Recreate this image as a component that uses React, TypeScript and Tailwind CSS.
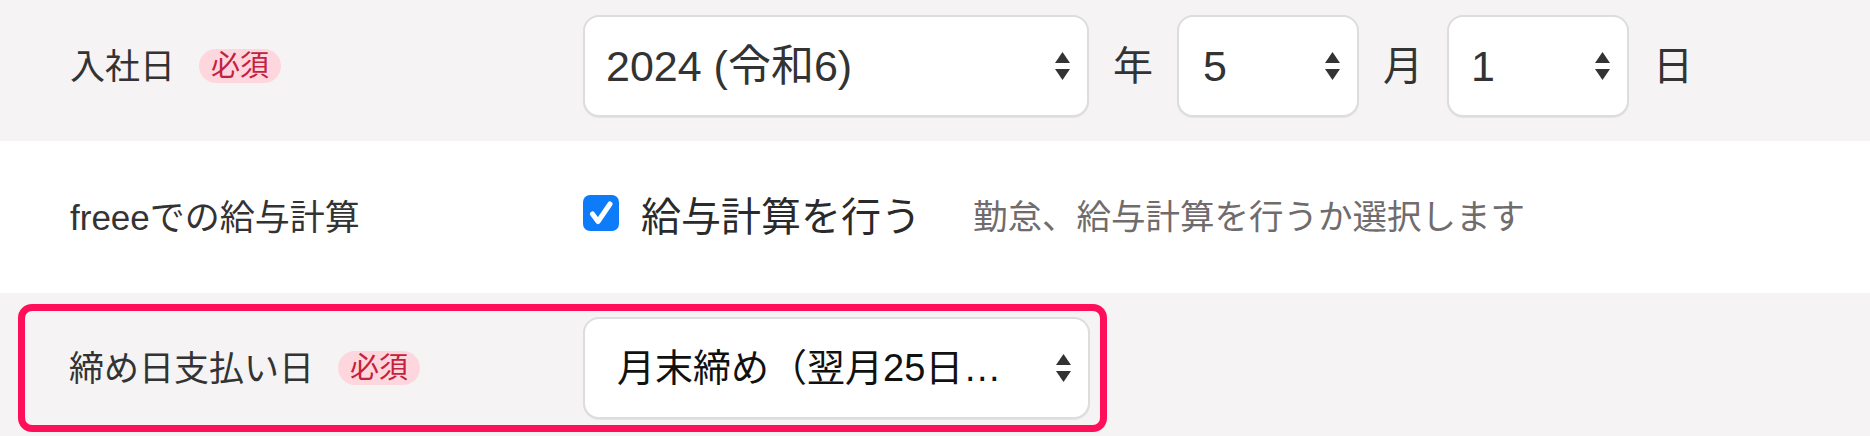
import React from "react";

function SelectArrows() {
  return (
    <svg width="15" height="28" viewBox="0 0 15 28" className="shrink-0">
      <path d="M7.5 0 L15 11 L0 11 Z" fill="#333333" />
      <path d="M0 17 L15 17 L7.5 28 Z" fill="#333333" />
    </svg>
  );
}

function FakeSelect({
  value,
  className,
  textClass,
}: {
  value: string;
  className: string;
  textClass: string;
}) {
  return (
    <div
      className={`flex h-[102px] items-center justify-between rounded-[16px] border-2 border-[#dddddd] bg-white pr-[17px] shadow-[0_1px_0_#e4e4e4] ${className}`}
    >
      <span className={`whitespace-nowrap leading-none ${textClass}`}>{value}</span>
      <SelectArrows />
    </div>
  );
}

function RequiredBadge() {
  return (
    <span className="flex h-[34px] items-center rounded-full bg-[#fdd7dd] px-[12px] text-[29px] leading-none text-[#c4213f]">
      必須
    </span>
  );
}

export default function App() {
  return (
    <div className="w-[1870px] font-['Liberation_Sans','Noto_Sans_CJK_JP',sans-serif] text-[#333333]">
      {/* 入社日 */}
      <div className="h-[141px] bg-[#f5f3f4] pl-[70px] pt-[15px]">
        <div className="flex h-[102px] items-center">
          <div className="flex w-[513px] items-center gap-[24px]">
            <span className="text-[35px] leading-none">入社日</span>
            <RequiredBadge />
          </div>
          <div className="flex items-center gap-[24px]">
            <FakeSelect value="2024 (令和6)" className="w-[506px] pl-[21px]" textClass="text-[43px] text-[#333333]" />
            <span className="text-[40px] leading-none">年</span>
            <FakeSelect value="5" className="w-[182px] pl-[24px]" textClass="text-[43px] text-[#333333]" />
            <span className="text-[40px] leading-none">月</span>
            <FakeSelect value="1" className="w-[182px] pl-[22px]" textClass="text-[43px] text-[#333333]" />
            <span className="text-[40px] leading-none">日</span>
          </div>
        </div>
      </div>

      {/* freeeでの給与計算 */}
      <div className="flex h-[152px] items-center bg-white pl-[70px]">
        <div className="w-[513px] text-[35px] leading-none">freeeでの給与計算</div>
        <div className="flex items-center">
          <svg width="36" height="36" viewBox="0 0 36 36" className="mb-[8px] shrink-0">
            <rect width="36" height="36" rx="7" fill="#0e7cf9" />
            <path
              d="M9.5 19 L15 26.5 L27 9"
              fill="none"
              stroke="#ffffff"
              strokeWidth="5"
              strokeLinecap="round"
              strokeLinejoin="round"
            />
          </svg>
          <span className="ml-[22px] text-[40px] leading-none text-[#2a2a2a]">給与計算を行う</span>
          <span className="ml-[52px] text-[34.5px] leading-none text-[#706c6c]">
            勤怠、給与計算を行うか選択します
          </span>
        </div>
      </div>

      {/* 締め日支払い日 */}
      <div className="h-[143px] bg-[#f5f3f4] pl-[18px] pt-[11px]">
        <div className="flex w-[1089px] items-center rounded-[14px] border-[7px] border-[#ff0f5a] py-[6px] pl-[44px]">
          <div className="flex w-[514px] items-center gap-[24px]">
            <span className="text-[35px] leading-none">締め日支払い日</span>
            <RequiredBadge />
          </div>
          <FakeSelect
            value="月末締め（翌月25日…"
            className="w-[507px] pl-[32px]"
            textClass="text-[38px] text-[#111111]"
          />
        </div>
      </div>
    </div>
  );
}
